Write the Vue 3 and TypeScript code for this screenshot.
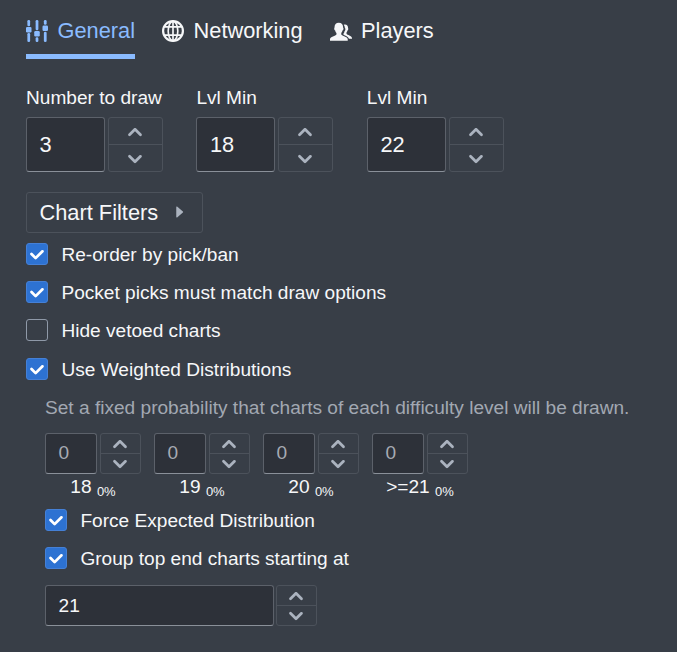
<script setup lang="ts">
import { ref } from 'vue'

interface Field { label: string; value: string }
interface Weight { level: string; percent: string }

const chevronUp = 'M12.71 9.29l-4-4C8.53 5.11 8.28 5 8 5s-.53.11-.71.29l-4 4a1.003 1.003 0 001.42 1.42L8 7.41l3.29 3.29c.18.19.43.3.71.3a1.003 1.003 0 00.71-1.71z'
const chevronDown = 'M12 5c-.28 0-.53.11-.71.29L8 8.59l-3.29-3.3a1.003 1.003 0 00-1.42 1.42l4 4c.18.18.43.29.71.29s.53-.11.71-.29l4-4A1.003 1.003 0 0012 5z'
const tick = 'M12 5c-.28 0-.53.11-.71.29L7 9.59l-2.29-2.3a1.003 1.003 0 00-1.42 1.42l3 3c.18.18.43.29.71.29s.53-.11.71-.29l5-5A1.003 1.003 0 0012 5z'

const fields = ref<Field[]>([
  { label: 'Number to draw', value: '3' },
  { label: 'Lvl Min', value: '18' },
  { label: 'Lvl Min', value: '22' },
])
const options = ref([
  { label: 'Re-order by pick/ban', checked: true },
  { label: 'Pocket picks must match draw options', checked: true },
  { label: 'Hide vetoed charts', checked: false },
  { label: 'Use Weighted Distributions', checked: true },
])
const weights: Weight[] = [
  { level: '18', percent: '0%' },
  { level: '19', percent: '0%' },
  { level: '20', percent: '0%' },
  { level: '>=21', percent: '0%' },
]
const weightOptions = ref([
  { label: 'Force Expected Distribution', checked: true },
  { label: 'Group top end charts starting at', checked: true },
])
</script>

<template>
  <main class="panel">
    <nav class="tabs">
      <a class="tab active">
        <svg class="icon" viewBox="0 0 16 16">
          <rect x="1" y="0" width="2" height="4.5" rx="0.9" /><rect x="0" y="5" width="4" height="4" rx="0.9" /><rect x="1" y="9.5" width="2" height="6.5" rx="0.9" />
          <rect x="7" y="0" width="2" height="7.5" rx="0.9" /><rect x="6" y="8" width="4" height="4" rx="0.9" /><rect x="7" y="12.5" width="2" height="3.5" rx="0.9" />
          <rect x="13" y="0" width="2" height="3.5" rx="0.9" /><rect x="12" y="4" width="4" height="4" rx="0.9" /><rect x="13" y="8.5" width="2" height="7.5" rx="0.9" />
        </svg>
        <span>General</span>
      </a>
      <a class="tab">
        <svg class="icon line" viewBox="0 0 16 16">
          <circle cx="8" cy="8" r="7.2" stroke-width="1.6" />
          <ellipse cx="8" cy="8" rx="3.5" ry="7" />
          <path d="M8 1v14M1.6 5h12.8M1.6 11h12.8" />
        </svg>
        <span>Networking</span>
      </a>
      <a class="tab">
        <svg class="icon" viewBox="0 0 16 16">
          <path d="M6.4 2c2 0 3.2 1.3 3.1 3.3 0 .5.4.5.3 1.2-.1.6-.4.8-.6 1-.2.9-.6 1.5-1 1.9v1.2c.6 1.1 4.5 1.5 4.7 3.3v1.2H0v-1.2c.2-1.8 4.1-2.2 4.700-3.300V9.400c-.5-.4-.9-1-1-1.900-.3-.2-.6-.4-.6-1-.1-.7.2-.8.2-1.200C3.200 3.300 4.400 2 6.400 2z" />
          <path d="M10 3.400c1.900-.5 3.200.5 3.100 2.300 0 .4.300.5.200 1-.1.500-.300.700-.500.800-.2.800-.5 1.200-.8 1.500v1c.5 1 3.800 1.500 4 3v.6h-2.200c-.7-1.500-2.600-2-4-2.800v-.9c.4-.5.6-1 .7-1.600.4-.4.7-.9.7-1.600 0-.5-.1-.8-.4-1.100 0-.8-.3-1.600-.8-2.200z" />
        </svg>
        <span>Players</span>
      </a>
    </nav>

    <section class="fields">
      <label v-for="(field, i) in fields" :key="i" class="field">
        <span class="caption">{{ field.label }}</span>
        <span class="numeric large">
          <span class="input">{{ field.value }}</span>
          <span class="stepper">
            <span class="step"><svg viewBox="0 0 16 16"><path :d="chevronUp" /></svg></span>
            <span class="step"><svg viewBox="0 0 16 16"><path :d="chevronDown" /></svg></span>
          </span>
        </span>
      </label>
    </section>

    <button class="filters" type="button">
      <span>Chart Filters</span>
      <svg viewBox="0 0 16 16"><path d="M11 8c0-.15-.07-.28-.17-.37l-4-3.5A.495.495 0 006 4.5v7a.495.495 0 00.83.37l4-3.5c.1-.09.17-.22.17-.37z" /></svg>
    </button>

    <section class="options">
      <label v-for="option in options" :key="option.label" class="check" @click="option.checked = !option.checked">
        <span class="box" :class="{ on: option.checked }"><svg v-if="option.checked" viewBox="0 0 16 16"><path :d="tick" /></svg></span>
        <span class="text">{{ option.label }}</span>
      </label>
    </section>

    <section class="weighted">
      <p class="hint">Set a fixed probability that charts of each difficulty level will be drawn.</p>
      <div class="weights">
        <div v-for="weight in weights" :key="weight.level" class="weight">
          <span class="numeric">
            <span class="input muted">0</span>
            <span class="stepper">
              <span class="step"><svg viewBox="0 0 16 16"><path :d="chevronUp" /></svg></span>
              <span class="step"><svg viewBox="0 0 16 16"><path :d="chevronDown" /></svg></span>
            </span>
          </span>
          <span class="level">{{ weight.level }} <sub>{{ weight.percent }}</sub></span>
        </div>
      </div>
      <div class="options">
        <label v-for="option in weightOptions" :key="option.label" class="check" @click="option.checked = !option.checked">
          <span class="box" :class="{ on: option.checked }"><svg v-if="option.checked" viewBox="0 0 16 16"><path :d="tick" /></svg></span>
          <span class="text">{{ option.label }}</span>
        </label>
      </div>
      <span class="numeric wide">
        <span class="input">21</span>
        <span class="stepper">
          <span class="step"><svg viewBox="0 0 16 16"><path :d="chevronUp" /></svg></span>
          <span class="step"><svg viewBox="0 0 16 16"><path :d="chevronDown" /></svg></span>
        </span>
      </span>
    </section>
  </main>
</template>

<style>
body { background: #383e47; }
</style>

<style scoped>
.panel {
  box-sizing: border-box;
  height: 652px;
  padding: 10px 26px 0;
  overflow: hidden;
  background: #383e47;
  color: #f6f7f9;
  font: 19.1px/24px "Liberation Sans", Arial, sans-serif;
}
svg { display: block; fill: currentColor; }
.tabs { display: flex; gap: 27px; }
.tab {
  display: flex;
  align-items: center;
  gap: 9.5px;
  height: 41px;
  padding-bottom: 3px;
  border-bottom: 5px solid transparent;
  font-size: 21.8px;
}
.active { color: #8abbff; border-bottom-color: #8abbff; }
.icon { width: 22px; height: 22px; }
.line { fill: none; stroke: currentColor; stroke-width: 1.2; }
.fields { display: grid; grid-template-columns: repeat(3, 170.4px); margin-top: 26px; }
.field { display: flex; flex-direction: column; gap: 7px; }
.caption { padding-top: 1px; }
.numeric { display: flex; gap: 3px; height: 41px; }
.input {
  box-sizing: border-box;
  display: flex;
  align-items: center;
  width: 52px;
  padding-left: 12.6px;
  background: #2d3139;
  border: 1px solid #5c616a;
  border-bottom-color: #8a9099;
  border-radius: 3px;
}
.muted { color: #a7abb3; }
.stepper {
  box-sizing: border-box;
  display: flex;
  flex-direction: column;
  width: 41px;
  border: 1px solid #4c525b;
  border-radius: 3px;
  color: #abb3bf;
}
.step {
  flex: 1;
  display: flex;
  align-items: center;
  justify-content: center;
  min-height: 0;
  padding: 1px 1.5px 0 0;
}
.step + .step { border-top: 1px solid #4c525b; }
.step svg { width: 22px; height: 22px; flex: none; }
.large { height: 55px; font-size: 21.8px; }
.large .input { width: 79px; }
.large .stepper { width: 55px; }
.wide { gap: 2px; }
.wide .input { width: 229px; padding-top: 1px; }
.filters {
  display: flex;
  align-items: center;
  gap: 9.5px;
  width: 177px;
  height: 41px;
  margin-top: 20px;
  padding: 0 0 0 12.5px;
  background: transparent;
  border: 1px solid #4c525b;
  border-radius: 3px;
  color: inherit;
  font: 21.8px/24px "Liberation Sans", Arial, sans-serif;
}
.filters svg { width: 22px; height: 22px; margin-top: -1px; color: #abb3bf; }
.options { display: flex; flex-direction: column; gap: 14.2px; }
.filters + .options { margin-top: 9px; }
.check { display: flex; align-items: center; gap: 13.4px; height: 24px; }
.text { padding-top: 2px; }
.box {
  box-sizing: border-box;
  width: 22px;
  height: 22px;
  border: 1px solid #8f99a8;
  border-radius: 3px;
}
.box.on { background: #2d72d2; border-color: #4580d6; color: #fff; }
.box svg { width: 22px; height: 22px; margin: -1px; }
.weighted { margin-left: 19px; }
.hint { margin: 15px 0 13px; color: #a2a8b2; white-space: nowrap; }
.weights { display: grid; grid-template-columns: repeat(4, 109px); }
.level { display: block; width: 96px; text-align: center; line-height: 26px; }
sub { font-size: 13px; line-height: 0; vertical-align: -3px; }
.weights + .options { margin-top: 8px; margin-bottom: 15px; }
</style>
